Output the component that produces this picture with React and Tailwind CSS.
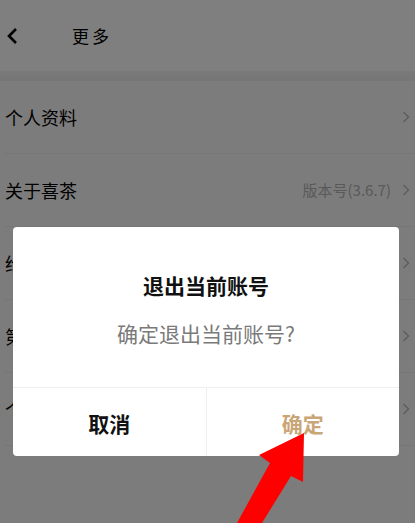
import React from 'react';

const font = { fontFamily: '"Noto Sans CJK SC", "Noto Sans", sans-serif' };

const rows = [
  { label: '个人资料' },
  { label: '关于喜茶', extra: '版本号(3.6.7)' },
  { label: '给喜茶评分' },
  { label: '第三方信息共享清单' },
  { label: '个人信息收集清单' },
];

function Chevron() {
  return (
    <svg width="8" height="12" viewBox="0 0 8 12" fill="none">
      <polyline points="1.5,1 6.5,6 1.5,11" stroke="#b6b6b6" strokeWidth="1.3" />
    </svg>
  );
}

export default function App() {
  return (
    <div className="relative w-[415px] h-[523px] overflow-hidden bg-[#f9f9f9]" style={font}>
      {/* Header */}
      <header className="h-[71px] bg-white flex items-center">
        <button className="pl-[6px] pr-[54px] flex items-center">
          <svg width="12" height="18" viewBox="0 0 12 18" fill="none">
            <polyline points="10,2 3,9 10,16" stroke="#000" strokeWidth="2.6" strokeLinejoin="miter" />
          </svg>
        </button>
        <h1 className="text-[17px] text-black tracking-[3px] leading-none -mt-[1px]">更多</h1>
      </header>
      <div className="h-[10px] bg-gradient-to-b from-[#f4f4f4] to-[#ececec]" />

      {/* Settings list */}
      <div className="pl-[5px]">
        {rows.map((row) => (
          <div
            key={row.label}
            className="h-[73px] flex items-center justify-between pr-[5px] border-b border-[#ececec]"
          >
            <span className="text-[18px] text-black">{row.label}</span>
            <div className="flex items-center gap-[11px]">
              {row.extra && <span className="text-[15px] text-[#b3b3b3]">{row.extra}</span>}
              <Chevron />
            </div>
          </div>
        ))}
      </div>

      {/* Logout dialog */}
      <div className="absolute inset-0 bg-black/50 px-[13px] pt-[227px]">
        <div className="w-[386px] bg-white rounded-[4px] overflow-hidden">
          <div className="h-[160px] flex flex-col items-center pt-[46px]">
            <p className="text-[21px] font-bold text-[#111] leading-[24px]">退出当前账号</p>
            <p className="mt-[24px] text-[21px] text-[#7a7a7a] leading-[24px]">确定退出当前账号?</p>
          </div>
          <div className="h-[69px] flex border-t border-[#efefef]">
            <button className="flex-1 flex items-center justify-center text-[21px] font-bold text-[#111] pt-[3px]">
              取消
            </button>
            <button className="flex-1 flex items-center justify-center text-[21px] font-bold text-[#c9a677] border-l border-[#efefef] pt-[3px]">
              确定
            </button>
          </div>
        </div>
      </div>

      {/* Red pointer arrow */}
      <svg className="absolute left-0 top-0" width="415" height="523" viewBox="0 0 415 523">
        <polygon
          points="304,433 303,482 291,476 262,523 237,523 270,463 259,455"
          fill="#ff0000"
        />
      </svg>
    </div>
  );
}
